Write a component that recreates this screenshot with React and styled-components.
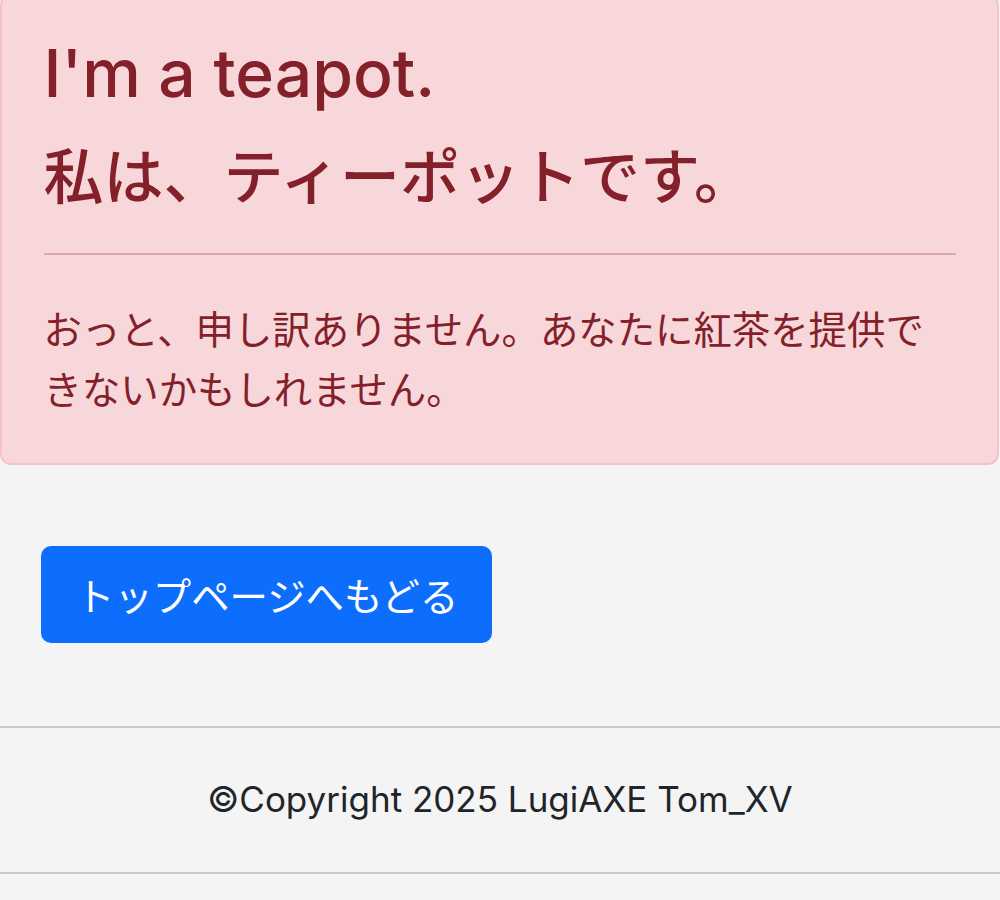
import styled, { createGlobalStyle } from 'styled-components'

const GlobalStyle = createGlobalStyle`
  html, body {
    margin: 0;
    padding: 0;
    background: #f4f4f4;
  }
  body {
    font-family: Inter, 'Noto Sans CJK JP', sans-serif;
    color: #212529;
  }
  * {
    box-sizing: border-box;
  }
`

const Page = styled.div`
  display: flex;
  flex-direction: column;
  width: 1000px;
`

const Alert = styled.div`
  margin: -6px 1px 0 0;
  padding: 38.4px 41.5px 42.4px;
  background: #f8d7da;
  border: 2.4px solid #f5c2c7;
  border-radius: 11px;
  color: #842029;
`

const Heading = styled.h1`
  margin: 0;
  font-weight: 500;
  font-size: ${(p) => p.$size}px;
  line-height: 1.2;
  margin-bottom: ${(p) => p.$gap || 0}px;
`

const Divider = styled.hr`
  margin: 40.4px 0 45.4px;
  border: 0;
  border-top: 2.4px solid #842029;
  opacity: 0.25;
`

const Message = styled.p`
  margin: 0;
  font-size: 38.4px;
  line-height: 60px;
`

const Actions = styled.div`
  display: flex;
  padding: 81px 41px 83px;
`

const Button = styled.a`
  display: inline-flex;
  align-items: center;
  justify-content: center;
  height: 97px;
  padding: 0 34px 0 35px;
  background: #0d6efd;
  color: #fff;
  border-radius: 10px;
  font-size: 38.4px;
  text-decoration: none;
`

const Footer = styled.footer`
  display: flex;
  align-items: center;
  justify-content: center;
  height: 148px;
  padding-bottom: 2px;
  border-top: 2px solid #c9c9c9;
  border-bottom: 2px solid #c9c9c9;
  font-size: 35px;
  color: #212529;
`

export default function App() {
  return (
    <>
      <GlobalStyle />
      <Page>
        <Alert role="alert">
          <Heading $size={66} $gap={27}>I'm a teapot.</Heading>
          <Heading as="h2" $size={60}>私は、ティーポットです。</Heading>
          <Divider />
          <Message>
            おっと、申し訳ありません。あなたに紅茶を提供できないかもしれません。
          </Message>
        </Alert>
        <Actions>
          <Button href="#">トップページへもどる</Button>
        </Actions>
        <Footer>©Copyright 2025 LugiAXE Tom_XV</Footer>
      </Page>
    </>
  )
}
